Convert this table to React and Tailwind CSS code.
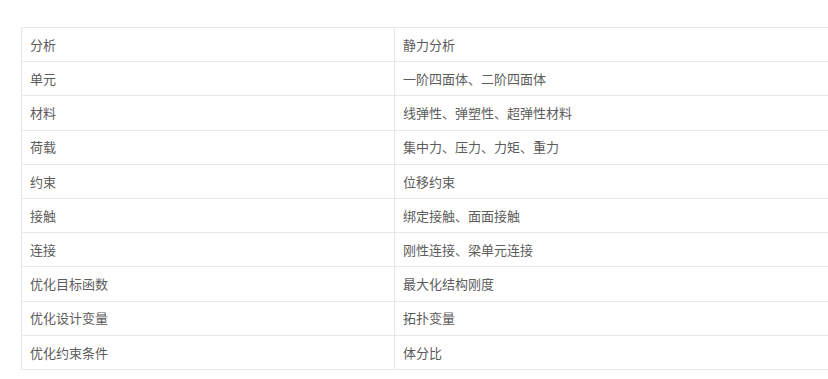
const rows = [
  ['分析', '静力分析'],
  ['单元', '一阶四面体、二阶四面体'],
  ['材料', '线弹性、弹塑性、超弹性材料'],
  ['荷载', '集中力、压力、力矩、重力'],
  ['约束', '位移约束'],
  ['接触', '绑定接触、面面接触'],
  ['连接', '刚性连接、梁单元连接'],
  ['优化目标函数', '最大化结构刚度'],
  ['优化设计变量', '拓扑变量'],
  ['优化约束条件', '体分比'],
]

export default function App() {
  return (
    <div className="w-[828px] h-[379px] overflow-hidden bg-white pt-[27px] pl-[21px]">
      <div
        className="w-[830px] border-t border-l border-[#e8e8e8] text-[13px] text-[#5c5c5c]"
        style={{ fontFamily: '"Noto Sans CJK SC", "Noto Sans", sans-serif' }}
      >
        {rows.map(([k, v]) => (
          <div key={k} className="flex h-[34.2px] border-b border-[#e8e8e8]">
            <div className="w-[373px] shrink-0 flex items-center pl-[8px] border-r border-[#e8e8e8]">{k}</div>
            <div className="flex-1 flex items-center pl-[8px]">{v}</div>
          </div>
        ))}
      </div>
    </div>
  )
}
